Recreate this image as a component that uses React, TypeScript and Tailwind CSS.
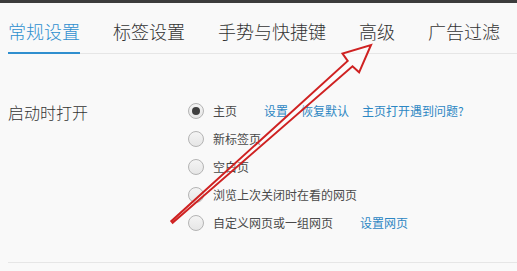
import React from "react";

const tabs = ["常规设置", "标签设置", "手势与快捷键", "高级", "广告过滤"];

function Radio({ checked }: { checked?: boolean }) {
  return (
    <span className="flex h-[16px] w-[16px] shrink-0 items-center justify-center rounded-full border border-[#b4b4b4] bg-gradient-to-b from-[#f4f4f4] to-[#e6e6e6]">
      {checked && <span className="h-[8px] w-[8px] rounded-full bg-[#3f3f3f]" />}
    </span>
  );
}

const options: { label: string; checked?: boolean; links?: string[] }[] = [
  { label: "主页", checked: true, links: ["设置", "恢复默认", "主页打开遇到问题?"] },
  { label: "新标签页" },
  { label: "空白页" },
  { label: "浏览上次关闭时在看的网页" },
  { label: "自定义网页或一组网页", links: ["设置网页"] },
];

function Arrow() {
  const tail = [172, 222];
  const tip = [371, 45];
  const dx = tip[0] - tail[0];
  const dy = tip[1] - tail[1];
  const len = Math.hypot(dx, dy);
  const u = [dx / len, dy / len];
  const n = [-u[1], u[0]];
  const headLen = 28;
  const B = [tip[0] - headLen * u[0], tip[1] - headLen * u[1]];
  const hw = 3.6;
  const barb = 12.5;
  const tw = 1.1;
  const p = (x: number, y: number) => `${x.toFixed(1)},${y.toFixed(1)}`;
  const pts = [
    p(tail[0] + tw * n[0], tail[1] + tw * n[1]),
    p(B[0] + hw * n[0], B[1] + hw * n[1]),
    p(B[0] + barb * n[0] + 1 * u[0], B[1] + barb * n[1] + 1 * u[1]),
    p(tip[0], tip[1]),
    p(B[0] - barb * n[0] + 1 * u[0], B[1] - barb * n[1] + 1 * u[1]),
    p(B[0] - hw * n[0], B[1] - hw * n[1]),
    p(tail[0] - tw * n[0], tail[1] - tw * n[1]),
  ].join(" ");
  return (
    <svg
      className="pointer-events-none absolute left-0 top-0"
      width={517}
      height={271}
      viewBox="0 0 517 271"
    >
      <polygon
        points={pts}
        fill="rgba(255,255,255,0.35)"
        stroke="#cf2222"
        strokeWidth={2}
        strokeLinejoin="miter"
      />
    </svg>
  );
}

export default function App() {
  return (
    <div
      className="relative h-[271px] w-[517px] overflow-hidden bg-[#f9f9f9]"
      style={{ fontFamily: '"Noto Sans CJK SC", "Noto Sans", sans-serif' }}
    >
      <div className="h-[3px] bg-[#3c3c3c]" />
      <div className="pl-[8px]">
        <div className="flex gap-[33px] border-b border-[#e6e6e6] pt-[16px]">
          {tabs.map((t, i) => (
            <div
              key={t}
              className={
                i === 0
                  ? "-mb-px border-b-2 border-[#2f8fcf] pb-[8px] text-[18px] font-light leading-[24px] text-[#2f8fcf]"
                  : "pb-[10px] text-[18px] font-light leading-[24px] text-[#333333]"
              }
            >
              {t}
            </div>
          ))}
        </div>
        <div className="mt-[43px] flex border-b border-[#e6e6e6] pb-[25px]">
          <div className="w-[180px] pt-[5px] text-[16px] font-light leading-[20px] text-[#333333]">
            启动时打开
          </div>
          <div className="flex flex-col">
            {options.map((o) => (
              <div key={o.label} className="flex h-[28px] items-center">
                <Radio checked={o.checked} />
                <span className="ml-[9px] text-[12px] text-[#4a4a4a]">{o.label}</span>
                {o.links && (
                  <div className="ml-[27px] flex gap-[13px]">
                    {o.links.map((l) => (
                      <span key={l} className="text-[12px] text-[#2d87c3]">
                        {l}
                      </span>
                    ))}
                  </div>
                )}
              </div>
            ))}
          </div>
        </div>
      </div>
      <Arrow />
    </div>
  );
}
